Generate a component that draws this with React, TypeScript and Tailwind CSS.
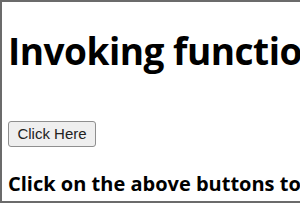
export default function App() {
  return (
    <div className="w-[300px] h-[210px] overflow-hidden bg-white">
      <div className="w-[320px] h-[203px] border-t-2 border-l-2 border-b-2 border-[#6b6b6b] pl-[6px] overflow-hidden whitespace-nowrap" style={{ fontFamily: '"Open Sans", sans-serif' }}>
        <h1 className="text-[37px] font-bold leading-none text-black mt-[30px] tracking-[-0.5px]">Invoking functions</h1>
        <div className="mt-[52px]">
          <button className="h-[26px] w-[88px] text-[15px] text-[#222] bg-[#efefef] border border-[#8f8f8f] rounded-[3px]" style={{ fontFamily: '"Liberation Sans", Arial, sans-serif' }}>Click Here</button>
        </div>
        <p className="mt-[27px] text-[20px] font-bold leading-none text-black">Click on the above buttons to see</p>
      </div>
    </div>
  );
}
